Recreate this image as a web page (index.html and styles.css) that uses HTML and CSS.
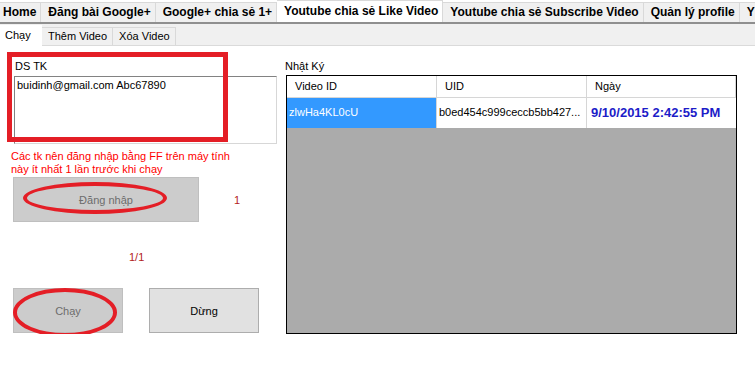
FILE: index.html
```html
<!DOCTYPE html>
<html lang="vi">

<head>
	<meta charset="UTF-8">
	<meta name="viewport" content="width=device-width, initial-scale=1.0">
	<title>Youtube chia sẻ Like Video</title>
	<link rel="stylesheet" href="styles.css">
</head>

<body>
	<div class="tabs">
		<span class="tab">Home</span>
		<span class="tab">Đăng bài Google+</span>
		<span class="tab">Google+ chia sẻ 1+</span>
		<span class="tab tab--active">Youtube chia sẻ Like Video</span>
		<span class="tab">Youtube chia sẻ Subscribe Video</span>
		<span class="tab">Quản lý profile</span>
		<span class="tab">Y</span>
	</div>
	<div class="subtabs">
		<span class="subtab subtab--active">Chạy</span>
		<span class="subtab">Thêm Video</span>
		<span class="subtab">Xóa Video</span>
	</div>

	<div class="main">
		<div class="left">
			<div class="acct">
				<div class="acct__label">DS TK</div>
				<div class="acct__list">buidinh@gmail.com Abc67890</div>
				<div class="mark-box"></div>
			</div>
			<div class="note">Các tk nên đăng nhập bằng FF trên máy tính<br>này ít nhất 1 lần trước khi chạy</div>
			<div class="login-row">
				<div class="btn btn--disabled btn--login">Đăng nhập
					<span class="mark-oval mark-oval--login"></span>
				</div>
				<span class="count">1</span>
			</div>
			<div class="progress">1/1</div>
			<div class="run-row">
				<div class="btn btn--disabled">Chạy
					<span class="mark-oval mark-oval--run"></span>
				</div>
				<div class="btn">Dừng</div>
			</div>
		</div>

		<div class="right">
			<div class="log__label">Nhật Ký</div>
			<div class="grid">
				<div class="grid__head">
					<div class="grid__hcell">Video ID</div>
					<div class="grid__hcell">UID</div>
					<div class="grid__hcell">Ngày</div>
				</div>
				<div class="grid__row">
					<div class="grid__cell grid__cell--selected">zlwHa4KL0cU</div>
					<div class="grid__cell">b0ed454c999ceccb5bb427...</div>
					<div class="grid__cell grid__cell--date">9/10/2015 2:42:55 PM</div>
				</div>
			</div>
		</div>
	</div>
</body>

</html>
```

FILE: styles.css
```css
body {
	margin: 0;
	font-family: "Liberation Sans", Arial, sans-serif;
	font-size: 11px;
	color: #000;
	background: #fff;
	overflow: hidden;
}

/* top tab strip */
.tabs {
	display: flex;
	height: 22px;
	margin-left: -4px;
	border-bottom: 2px solid #8f8f8f;
	white-space: nowrap;
}

.tab {
	flex: none;
	margin-top: 2px;
	padding: 0 4px 0 7px;
	font-size: 12px;
	font-weight: bold;
	line-height: 19px;
	background: #f0f0f0;
	border-top: 1px solid #d9d9d9;
	border-right: 1px solid #d9d9d9;
}

.tab--active {
	margin-top: 0;
	line-height: 21px;
	background: #fff;
}

/* inner tab strip */
.subtabs {
	display: flex;
	height: 20px;
	padding-top: 1px;
	background: #f0f0f0;
	border-bottom: 1px solid #dadada;
}

.subtab {
	flex: none;
	margin-top: 2px;
	padding: 0 5px 0 6px;
	line-height: 17px;
	border: 1px solid #d9d9d9;
	border-bottom: none;
	border-left: none;
}

.subtab--active {
	width: 42px;
	box-sizing: border-box;
	margin-top: 0;
	margin-bottom: -1px;
	padding: 0 0 0 5px;
	line-height: 20px;
	background: #fff;
	border: none;
}

.main {
	display: flex;
}

.left {
	flex: none;
	width: 285px;
}

.acct {
	position: relative;
	margin: 14px 0 0 14px;
}

.acct__label {
	margin-left: 1px;
	line-height: 13px;
	margin-bottom: 3px;
}

.acct__list {
	width: 263px;
	height: 68px;
	box-sizing: border-box;
	padding: 2px 2px;
	border: 1px solid #a0a0a0;
	border-color: #828282 #d7d7d7 #d7d7d7 #828282;
	line-height: 13px;
}

.mark-box {
	position: absolute;
	left: -7px;
	top: -8px;
	width: 221px;
	height: 90px;
	box-sizing: border-box;
	border: 5px solid #e41e26;
}

.note {
	margin: 6px 0 0 11px;
	color: #f00;
	line-height: 13px;
}

.login-row {
	display: flex;
	align-items: center;
	margin: 1px 0 0 13px;
}

.btn {
	position: relative;
	display: flex;
	align-items: center;
	justify-content: center;
	width: 110px;
	height: 45px;
	box-sizing: border-box;
	background: #e1e1e1;
	border: 1px solid #adadad;
}

.btn--disabled {
	background: #cccccc;
	border-color: #bfbfbf;
	color: #6d6d6d;
}

.btn--login {
	width: 186px;
}

.mark-oval {
	position: absolute;
	box-sizing: border-box;
	border: 4px solid #e41e26;
	border-radius: 50%;
}

.mark-oval--login {
	left: 9px;
	top: 4px;
	width: 144px;
	height: 32px;
}

.mark-oval--run {
	left: -1px;
	top: -1px;
	width: 104px;
	height: 49px;
}

.count {
	margin-left: 35px;
	color: #b22222;
}

.progress {
	margin: 29px 0 0 129px;
	line-height: 13px;
	color: #b22222;
}

.run-row {
	display: flex;
	gap: 26px;
	margin: 24px 0 0 13px;
}

/* log grid */
.right {
	flex: none;
	padding-top: 14px;
}

.log__label {
	line-height: 13px;
	margin-bottom: 2px;
}

.grid {
	width: 451px;
	height: 259px;
	box-sizing: border-box;
	margin-left: 1px;
	background: #ababab;
	border: 1px solid #000;
}

.grid__head,
.grid__row {
	display: grid;
	grid-template-columns: 150px 150px 149px;
	background: #fff;
}

.grid__hcell {
	height: 22px;
	box-sizing: border-box;
	padding-left: 8px;
	line-height: 21px;
	border-right: 1px solid #d6d6d6;
	border-bottom: 1px solid #d6d6d6;
}

.grid__cell {
	height: 30px;
	box-sizing: border-box;
	padding-left: 2px;
	line-height: 29px;
	border-right: 1px solid #d6d6d6;
	white-space: nowrap;
	overflow: hidden;
}

.grid__cell--selected {
	background: #3399ff;
	color: #fff;
}

.grid__cell--date {
	padding-left: 4px;
	font-size: 13px;
	font-weight: bold;
	color: #1c1cc8;
	border-right: none;
}
```
